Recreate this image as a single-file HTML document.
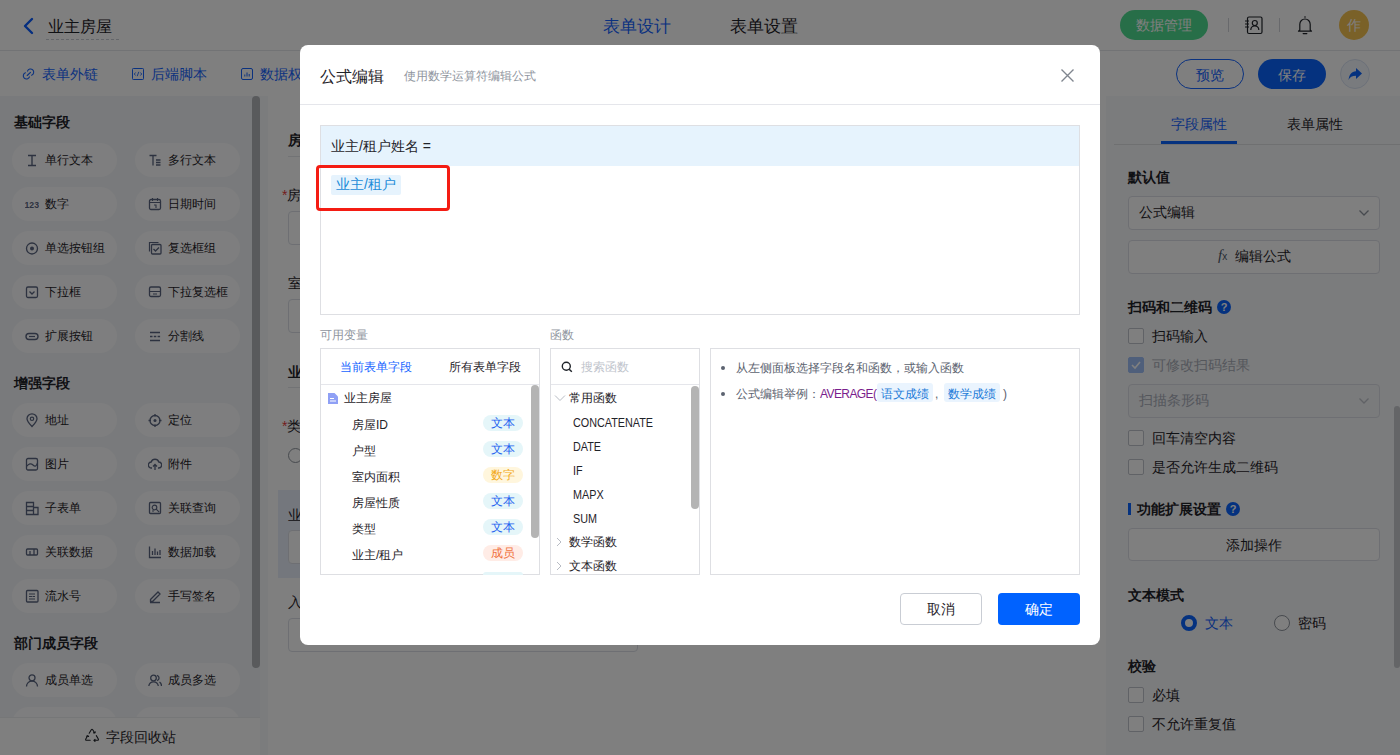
<!DOCTYPE html>
<html><head><meta charset="utf-8">
<style>
*{box-sizing:border-box;margin:0;padding:0}
html,body{width:1400px;height:755px;overflow:hidden;font-family:"Liberation Sans",sans-serif;color:#1f2329;background:#fff}
.a{position:absolute}
.hdr{left:0;top:0;width:1400px;height:51px;background:#fff;border-bottom:1px solid #e5e6eb}
.tb{left:0;top:51px;width:1400px;height:45px;background:#fff}
.lp{left:0;top:96px;width:260px;height:659px;background:#f3f5f9}
.gap{left:260px;top:96px;width:8px;height:659px;background:#f7f8fa}
.cv{left:268px;top:96px;width:838px;height:659px;background:#fff}
.rp{left:1106px;top:96px;width:294px;height:659px;background:#f7f8fa}
.mask{left:0;top:0;width:1400px;height:755px;background:rgba(0,0,0,.5)}
.modal{left:300px;top:45px;width:800px;height:600px;background:#fff;border-radius:8px}
.t16{font-size:16px;line-height:22px;white-space:nowrap}
.t14{font-size:14px;line-height:20px;white-space:nowrap}
.t12{font-size:12px;line-height:18px;white-space:nowrap}
.t13{font-size:13px;line-height:18px;white-space:nowrap}
.t14b{font-size:14px;line-height:20px;font-weight:bold;white-space:nowrap}
.pill{width:105px;height:34px;border-radius:17px;background:#fdfdfe}
.inp{border:1px solid #dcdfe6;border-radius:4px;background:#fff}
.cb{width:16px;height:16px;border:1px solid #c0c4cc;border-radius:2px;background:#fff}
.qm{width:14px;height:14px;border-radius:50%;background:#0a64ff;color:#fff;font-size:11px;line-height:14px;text-align:center;font-weight:bold}
.pn{border:1px solid #dedfe3;background:#fff}
.tag{width:40px;height:16px;border-radius:8px;font-size:12px;line-height:16px;text-align:center}
.fn{font-size:12px;line-height:18px;color:#1f2329;white-space:nowrap;transform:scaleX(0.9);transform-origin:0 0}
</style></head><body>

<div class="a hdr"></div>
<svg class="a" style="left:22px;top:17px" width="14" height="18" viewBox="0 0 14 18"><path d="M10 2 L3 9 L10 16" fill="none" stroke="#0a5cff" stroke-width="2.4" stroke-linecap="round" stroke-linejoin="round"/></svg>
<div class="a t16" style="left:48px;top:16px">业主房屋</div>
<div class="a" style="left:46px;top:39px;width:73px;border-top:1px dashed #c9cdd4"></div>
<div class="a t16" style="left:603px;top:15px;color:#1664ff;font-size:16.5px">表单设计</div>
<div class="a t16" style="left:730px;top:15px;color:#1f2329;font-size:16.5px">表单设置</div>
<div class="a" style="left:1120px;top:10px;width:88px;height:30px;border-radius:15px;background:#4fdc90"></div>
<div class="a t14" style="left:1136px;top:15px;color:#fff;font-size:14px">数据管理</div>
<div class="a" style="left:1228px;top:18px;width:1px;height:14px;background:#d0d3d9"></div>
<div class="a" style="left:1279px;top:18px;width:1px;height:14px;background:#d0d3d9"></div>
<svg class="a" style="left:1243px;top:16px" width="21" height="19" viewBox="0 0 21 19"><rect x="4.5" y="1" width="14.5" height="16.5" rx="1.5" fill="none" stroke="#1f2329" stroke-width="1.2"/><circle cx="11.8" cy="7" r="2.5" fill="none" stroke="#1f2329" stroke-width="1.2"/><path d="M7.8 14 Q7.8 10 11.8 10 Q15.8 10 15.8 14" fill="none" stroke="#1f2329" stroke-width="1.2"/><path d="M2 5h4M2 8h4M2 11h4" stroke="#1f2329" stroke-width="1.1"/></svg>
<svg class="a" style="left:1296px;top:15px" width="18" height="20" viewBox="0 0 18 20"><path d="M9 1.2v1.5M3.8 15V9.2a5.2 5.2 0 0 1 10.4 0V15l1.3 1.2h-13z" fill="none" stroke="#1f2329" stroke-width="1.2" stroke-linejoin="round"/><path d="M7.2 18.6h3.6" stroke="#1f2329" stroke-width="1.3" stroke-linecap="round"/></svg>
<div class="a" style="left:1339px;top:10px;width:30px;height:30px;border-radius:50%;background:#f5c250"></div>
<div class="a" style="left:1347px;top:17px;font-size:14px;line-height:16px;color:#fff">作</div>

<div class="a tb"></div>
<svg class="a" style="left:22px;top:67px" width="14" height="14" viewBox="0 0 14 14"><path d="M5.5 4.1 A3.2 3.2 0 1 1 9.6 8.2 M7.5 9.9 A3.2 3.2 0 1 1 3.4 5.8 M5.2 8.5 L8.5 5.3" fill="none" stroke="#1664ff" stroke-width="1.1" stroke-linecap="round"/></svg>
<div class="a t14" style="left:42px;top:64px;color:#1664ff">表单外链</div>
<svg class="a" style="left:132px;top:68px" width="12" height="12" viewBox="0 0 12 12"><rect x="0.5" y="0.5" width="11" height="11" rx="0.8" fill="none" stroke="#1664ff" stroke-width="1"/><path d="M3.6 4.5 L2.3 6 L3.6 7.5 M8.4 4.5 L9.7 6 L8.4 7.5 M6.8 3.8 L5.2 8.2" fill="none" stroke="#1664ff" stroke-width="0.9"/></svg>
<div class="a t14" style="left:151px;top:64px;color:#1664ff">后端脚本</div>
<svg class="a" style="left:241px;top:68px" width="12" height="12" viewBox="0 0 12 12"><rect x="0.5" y="0.5" width="11" height="11" rx="1.5" fill="none" stroke="#1664ff" stroke-width="1"/><path d="M3.8 8.5V6.5M6 8.5V4.5M8.2 8.5V6" stroke="#1664ff" stroke-width="1"/></svg>
<div class="a t14" style="left:260px;top:64px;color:#1664ff">数据权限</div>
<div class="a" style="left:1176px;top:59px;width:68px;height:30px;border-radius:15px;border:1px solid #1664ff;background:#fff"></div>
<div class="a t14" style="left:1196px;top:65px;color:#1664ff">预览</div>
<div class="a" style="left:1258px;top:59px;width:68px;height:30px;border-radius:15px;background:#0a64ff"></div>
<div class="a t14" style="left:1278px;top:65px;color:#fff">保存</div>
<div class="a" style="left:1340px;top:59px;width:30px;height:30px;border-radius:50%;border:1px solid #d9e2f2;background:#f2f6fd"></div>
<svg class="a" style="left:1347px;top:66px" width="16" height="16" viewBox="0 0 16 16"><path d="M9 2 L15 7.5 L9 13 V9.8 C5 9.8 3 11 1.5 14 C2 9 4.5 5.5 9 5.3 Z" fill="#0a64ff"/></svg>

<div class="a lp"></div>
<div class="a t14b" style="left:14px;top:112px">基础字段</div>
<div class="a pill" style="left:12px;top:143px"></div><svg class="a" style="left:25px;top:153px" width="14" height="15" viewBox="0 0 14 15"><path d="M3 2.5h8M3 12.5h8M7 2.5v10" stroke="#5a6580" stroke-width="1.4" fill="none"/></svg><div class="a t12" style="left:45px;top:151px">单行文本</div>
<div class="a pill" style="left:135px;top:143px"></div><svg class="a" style="left:148px;top:153px" width="14" height="15" viewBox="0 0 14 15"><path d="M1.5 2.5h7M5 2.5v10M8 7h4.5M8 9.5h4.5M8 12h4.5" stroke="#5a6580" stroke-width="1.3" fill="none"/></svg><div class="a t12" style="left:168px;top:151px">多行文本</div>
<div class="a pill" style="left:12px;top:187px"></div><svg class="a" style="left:25px;top:197px" width="14" height="15" viewBox="0 0 14 15"><text x="-0.5" y="10.5" font-size="9.5" font-weight="bold" font-family="Liberation Sans" fill="#5a6580" textLength="14.5" lengthAdjust="spacingAndGlyphs">123</text></svg><div class="a t12" style="left:45px;top:195px">数字</div>
<div class="a pill" style="left:135px;top:187px"></div><svg class="a" style="left:148px;top:197px" width="14" height="15" viewBox="0 0 14 15"><rect x="1.5" y="2.5" width="11" height="10" rx="1.5" stroke="#5a6580" stroke-width="1.3" fill="none"/><path d="M1.5 5.5h11M4.5 1v3M9.5 1v3M6 8h2v3" stroke="#5a6580" stroke-width="1.1" fill="none"/></svg><div class="a t12" style="left:168px;top:195px">日期时间</div>
<div class="a pill" style="left:12px;top:231px"></div><svg class="a" style="left:25px;top:241px" width="14" height="15" viewBox="0 0 14 15"><circle cx="7" cy="7.5" r="5.5" stroke="#5a6580" stroke-width="1.3" fill="none"/><circle cx="7" cy="7.5" r="2" fill="#5a6580"/></svg><div class="a t12" style="left:45px;top:239px">单选按钮组</div>
<div class="a pill" style="left:135px;top:231px"></div><svg class="a" style="left:148px;top:241px" width="14" height="15" viewBox="0 0 14 15"><path d="M1.5 10.5V1.5h9" stroke="#5a6580" stroke-width="1.2" fill="none"/><rect x="3.5" y="3.5" width="9.5" height="9.5" rx="1" stroke="#5a6580" stroke-width="1.3" fill="none"/><path d="M5.5 8l2 2 3.5-3.5" stroke="#5a6580" stroke-width="1.3" fill="none"/></svg><div class="a t12" style="left:168px;top:239px">复选框组</div>
<div class="a pill" style="left:12px;top:275px"></div><svg class="a" style="left:25px;top:285px" width="14" height="15" viewBox="0 0 14 15"><rect x="1.5" y="2" width="11" height="10.5" rx="1.5" stroke="#5a6580" stroke-width="1.3" fill="none"/><path d="M4.5 6.5l2.5 2.5 2.5-2.5" stroke="#5a6580" stroke-width="1.3" fill="none"/></svg><div class="a t12" style="left:45px;top:283px">下拉框</div>
<div class="a pill" style="left:135px;top:275px"></div><svg class="a" style="left:148px;top:285px" width="14" height="15" viewBox="0 0 14 15"><rect x="1.5" y="2" width="11" height="9.5" rx="1.5" stroke="#5a6580" stroke-width="1.3" fill="none"/><path d="M1.5 6.5h11M5 9h4" stroke="#5a6580" stroke-width="1.2" fill="none"/></svg><div class="a t12" style="left:168px;top:283px">下拉复选框</div>
<div class="a pill" style="left:12px;top:319px"></div><svg class="a" style="left:25px;top:329px" width="14" height="15" viewBox="0 0 14 15"><rect x="1" y="4.5" width="12" height="6" rx="3" stroke="#5a6580" stroke-width="1.4" fill="none"/><path d="M4 7.5h6" stroke="#5a6580" stroke-width="1.2"/></svg><div class="a t12" style="left:45px;top:327px">扩展按钮</div>
<div class="a pill" style="left:135px;top:319px"></div><svg class="a" style="left:148px;top:329px" width="14" height="15" viewBox="0 0 14 15"><path d="M2 3.5h10M2 11.5h10M2 7.5h2.5M5.8 7.5h2.5M9.6 7.5h2.5" stroke="#5a6580" stroke-width="1.3" fill="none"/></svg><div class="a t12" style="left:168px;top:327px">分割线</div>
<div class="a t14b" style="left:14px;top:373px">增强字段</div>
<div class="a pill" style="left:12px;top:403px"></div><svg class="a" style="left:25px;top:413px" width="14" height="15" viewBox="0 0 14 15"><path d="M7 13.5C3.5 10 2 7.8 2 5.8a5 5 0 0 1 10 0c0 2-1.5 4.2-5 7.7z" stroke="#5a6580" stroke-width="1.3" fill="none"/><circle cx="7" cy="5.8" r="1.7" stroke="#5a6580" stroke-width="1.2" fill="none"/></svg><div class="a t12" style="left:45px;top:411px">地址</div>
<div class="a pill" style="left:135px;top:403px"></div><svg class="a" style="left:148px;top:413px" width="14" height="15" viewBox="0 0 14 15"><circle cx="7" cy="7.5" r="5" stroke="#5a6580" stroke-width="1.3" fill="none"/><circle cx="7" cy="7.5" r="1.5" fill="#5a6580"/><path d="M7 1v2.5M7 11.5V14M0.5 7.5H3M11 7.5h2.5" stroke="#5a6580" stroke-width="1.3"/></svg><div class="a t12" style="left:168px;top:411px">定位</div>
<div class="a pill" style="left:12px;top:447px"></div><svg class="a" style="left:25px;top:457px" width="14" height="15" viewBox="0 0 14 15"><rect x="1.5" y="1.5" width="11" height="11.5" rx="1.5" stroke="#5a6580" stroke-width="1.3" fill="none"/><path d="M1.5 9.5 Q5 5 8 8 T12.5 6" stroke="#5a6580" stroke-width="1.2" fill="none"/></svg><div class="a t12" style="left:45px;top:455px">图片</div>
<div class="a pill" style="left:135px;top:447px"></div><svg class="a" style="left:148px;top:457px" width="14" height="15" viewBox="0 0 14 15"><path d="M4 11H3.5a3 3 0 0 1-.3-6 4 4 0 0 1 7.6 0 3 3 0 0 1-.3 6H10" stroke="#5a6580" stroke-width="1.3" fill="none"/><path d="M7 13V7.5M5 9.5l2-2 2 2" stroke="#5a6580" stroke-width="1.3" fill="none"/></svg><div class="a t12" style="left:168px;top:455px">附件</div>
<div class="a pill" style="left:12px;top:491px"></div><svg class="a" style="left:25px;top:501px" width="14" height="15" viewBox="0 0 14 15"><path d="M1.5 1.5h7v12h-7zM8.5 6.5h4.5v7H8.5M1.5 5.5h7M1.5 9.5h7" stroke="#5a6580" stroke-width="1.3" fill="none"/></svg><div class="a t12" style="left:45px;top:499px">子表单</div>
<div class="a pill" style="left:135px;top:491px"></div><svg class="a" style="left:148px;top:501px" width="14" height="15" viewBox="0 0 14 15"><rect x="1.5" y="1.5" width="11" height="11" rx="1" stroke="#5a6580" stroke-width="1.3" fill="none"/><circle cx="6.5" cy="6.5" r="2.3" stroke="#5a6580" stroke-width="1.2" fill="none"/><path d="M8.2 8.2l3 3M4 10h2" stroke="#5a6580" stroke-width="1.2"/></svg><div class="a t12" style="left:168px;top:499px">关联查询</div>
<div class="a pill" style="left:12px;top:535px"></div><svg class="a" style="left:25px;top:545px" width="14" height="15" viewBox="0 0 14 15"><path d="M5 4H2.5a1 1 0 0 0-1 1v4a1 1 0 0 0 1 1H5M9 4h2.5a1 1 0 0 1 1 1v4a1 1 0 0 1-1 1H9M5 6v4h4V4H5" stroke="#5a6580" stroke-width="1.3" fill="none"/></svg><div class="a t12" style="left:45px;top:543px">关联数据</div>
<div class="a pill" style="left:135px;top:535px"></div><svg class="a" style="left:148px;top:545px" width="14" height="15" viewBox="0 0 14 15"><path d="M1.5 1.5v11h11.5M4.5 10V6M7 10V3.5M9.5 10V6.5M12 10V5" stroke="#5a6580" stroke-width="1.3" fill="none"/></svg><div class="a t12" style="left:168px;top:543px">数据加载</div>
<div class="a pill" style="left:12px;top:579px"></div><svg class="a" style="left:25px;top:589px" width="14" height="15" viewBox="0 0 14 15"><rect x="1.5" y="1.5" width="11.5" height="11.5" rx="1" stroke="#5a6580" stroke-width="1.3" fill="none"/><path d="M4 5h6M4 7.5h3M7.5 7.5h2.5M4 10h6" stroke="#5a6580" stroke-width="1.1" fill="none"/></svg><div class="a t12" style="left:45px;top:587px">流水号</div>
<div class="a pill" style="left:135px;top:579px"></div><svg class="a" style="left:148px;top:589px" width="14" height="15" viewBox="0 0 14 15"><path d="M2.5 10.5l7.5-7.5 2 2-7.5 7.5H2.5zM2 13.5h10" stroke="#5a6580" stroke-width="1.3" fill="none"/></svg><div class="a t12" style="left:168px;top:587px">手写签名</div>
<div class="a t14b" style="left:14px;top:633px">部门成员字段</div>
<div class="a pill" style="left:12px;top:663px"></div><svg class="a" style="left:25px;top:673px" width="14" height="15" viewBox="0 0 14 15"><circle cx="7" cy="4.8" r="3" stroke="#5a6580" stroke-width="1.3" fill="none"/><path d="M1.5 13.5a5.5 5.5 0 0 1 11 0" stroke="#5a6580" stroke-width="1.3" fill="none"/></svg><div class="a t12" style="left:45px;top:671px">成员单选</div>
<div class="a pill" style="left:135px;top:663px"></div><svg class="a" style="left:148px;top:673px" width="14" height="15" viewBox="0 0 14 15"><circle cx="5.5" cy="5" r="2.8" stroke="#5a6580" stroke-width="1.3" fill="none"/><path d="M0.8 13a4.8 4.8 0 0 1 9.5 0M9 2.3a2.8 2.8 0 0 1 0 5.4M11.5 9a4.8 4.8 0 0 1 2 4" stroke="#5a6580" stroke-width="1.3" fill="none"/></svg><div class="a t12" style="left:168px;top:671px">成员多选</div>
<div class="a pill" style="left:12px;top:707px"></div><div class="a pill" style="left:135px;top:707px"></div>
<div class="a" style="left:252px;top:96px;width:8px;height:572px;border-radius:4px;background:#b2b4b8"></div>
<div class="a" style="left:0;top:717px;width:260px;height:38px;background:#fff;border-top:1px solid #eceef1"></div>
<svg class="a" style="left:84px;top:728px" width="16" height="15" viewBox="0 0 16 15"><path d="M5.2 5.2 L7.3 1.8 Q8 0.8 8.7 1.8 L10.6 4.8 M9.6 4.9 L10.8 5 L11.3 3.9 M12.3 7.6 L14.3 11 Q14.8 12.3 13.5 12.3 H10 M11 11.3 L9.9 12.3 L11 13.4 M6.2 12.3 H2.6 Q1.2 12.3 1.8 11 L3.6 7.8 M2.6 8.3 L3.7 7.6 L4.6 8.5" fill="none" stroke="#1f2329" stroke-width="1.1" stroke-linejoin="round" stroke-linecap="round"/></svg>
<div class="a t14" style="left:106px;top:727px;color:#1f2329">字段回收站</div>
<div class="a gap"></div>
<div class="a cv"></div>
<div class="a t14b" style="left:288px;top:130px">房屋信息</div>
<div class="a" style="left:288px;top:156px;width:800px;height:1px;background:#e5e6eb"></div>
<div class="a t14" style="left:282px;top:185px"><span style="color:#e83b3b">*</span>房屋ID</div>
<div class="a inp" style="left:288px;top:211px;width:350px;height:34px"></div>
<div class="a t14" style="left:288px;top:273px">室内面积</div>
<div class="a inp" style="left:288px;top:299px;width:350px;height:34px"></div>
<div class="a t14b" style="left:288px;top:362px">业主信息</div>
<div class="a" style="left:288px;top:387px;width:800px;height:1px;background:#e5e6eb"></div>
<div class="a t14" style="left:282px;top:416px"><span style="color:#e83b3b">*</span>类型</div>
<div class="a" style="left:288px;top:448px;width:15px;height:15px;border-radius:50%;border:1px solid #8f959e;background:#fff"></div>
<div class="a" style="left:278px;top:490px;width:820px;height:88px;background:#e8eefa"></div>
<div class="a t14" style="left:288px;top:505px">业主/租户姓名</div>
<div class="a inp" style="left:288px;top:530px;width:350px;height:34px"></div>
<div class="a t14" style="left:288px;top:592px">入住时间</div>
<div class="a inp" style="left:288px;top:618px;width:350px;height:34px"></div>

<div class="a rp"></div>
<div class="a t14" style="left:1171px;top:114px;color:#1664ff">字段属性</div>
<div class="a t14" style="left:1287px;top:114px">表单属性</div>
<div class="a" style="left:1114px;top:144px;width:286px;height:1px;background:#dee0e3"></div>
<div class="a" style="left:1161px;top:141px;width:76px;height:3px;background:#0a64ff"></div>
<div class="a t14b" style="left:1128px;top:167px">默认值</div>
<div class="a inp" style="left:1128px;top:196px;width:252px;height:34px"></div>
<div class="a t14" style="left:1139px;top:202px">公式编辑</div>
<svg class="a" style="left:1358px;top:208px" width="12" height="10" viewBox="0 0 12 10"><path d="M1.5 2.5l4.5 4.5 4.5-4.5" fill="none" stroke="#8f959e" stroke-width="1.3"/></svg>
<div class="a inp" style="left:1128px;top:240px;width:252px;height:34px"></div>
<div class="a" style="left:1218px;top:245px;font-family:'Liberation Serif',serif;font-style:italic;font-size:15px;line-height:20px;color:#4e5969">f<span style="font-size:10px;font-style:normal;font-family:'Liberation Sans',sans-serif">x</span></div>
<div class="a t14" style="left:1235px;top:246px">编辑公式</div>
<div class="a t14b" style="left:1128px;top:297px">扫码和二维码</div>
<div class="a qm" style="left:1217px;top:300px">?</div>
<div class="a cb" style="left:1128px;top:328px"></div>
<div class="a t14" style="left:1152px;top:326px">扫码输入</div>
<div class="a cb" style="left:1128px;top:357px;background:#9fbff7;border-color:#9fbff7"></div>
<svg class="a" style="left:1130px;top:359px" width="12" height="12" viewBox="0 0 12 12"><path d="M2 6l3 3 5-6" fill="none" stroke="#fff" stroke-width="1.6"/></svg>
<div class="a t14" style="left:1152px;top:355px;color:#a9aeb8">可修改扫码结果</div>
<div class="a inp" style="left:1128px;top:384px;width:252px;height:34px;background:#f5f6f8"></div>
<div class="a t14" style="left:1139px;top:390px;color:#a9aeb8">扫描条形码</div>
<svg class="a" style="left:1358px;top:396px" width="12" height="10" viewBox="0 0 12 10"><path d="M1.5 2.5l4.5 4.5 4.5-4.5" fill="none" stroke="#c0c4cc" stroke-width="1.3"/></svg>
<div class="a cb" style="left:1128px;top:430px"></div>
<div class="a t14" style="left:1152px;top:428px">回车清空内容</div>
<div class="a cb" style="left:1128px;top:459px"></div>
<div class="a t14" style="left:1152px;top:457px">是否允许生成二维码</div>
<div class="a" style="left:1128px;top:503px;width:3px;height:12px;background:#0a64ff"></div>
<div class="a t14b" style="left:1137px;top:499px">功能扩展设置</div>
<div class="a qm" style="left:1226px;top:502px">?</div>
<div class="a inp" style="left:1128px;top:528px;width:252px;height:33px"></div>
<div class="a t14" style="left:1226px;top:535px">添加操作</div>
<div class="a t14b" style="left:1128px;top:585px">文本模式</div>
<div class="a" style="left:1181px;top:615px;width:16px;height:16px;border-radius:50%;border:4.5px solid #0a64ff;background:#fff"></div>
<div class="a t14" style="left:1205px;top:613px;color:#1664ff">文本</div>
<div class="a" style="left:1274px;top:615px;width:16px;height:16px;border-radius:50%;border:1px solid #8f959e;background:#fff"></div>
<div class="a t14" style="left:1298px;top:613px">密码</div>
<div class="a t14b" style="left:1128px;top:656px">校验</div>
<div class="a cb" style="left:1128px;top:687px"></div>
<div class="a t14" style="left:1152px;top:685px">必填</div>
<div class="a cb" style="left:1128px;top:716px"></div>
<div class="a t14" style="left:1152px;top:714px">不允许重复值</div>
<div class="a" style="left:1394px;top:406px;width:6px;height:262px;border-radius:3px;background:#c8cacf"></div>

<div class="a mask"></div>
<div class="a modal"></div>
<div class="a t16" style="left:320px;top:66px;color:#1f2329">公式编辑</div>
<div class="a t12" style="left:404px;top:67px;color:#8f959e;font-size:12px">使用数学运算符编辑公式</div>
<svg class="a" style="left:1060px;top:68px" width="15" height="15" viewBox="0 0 15 15"><path d="M1.5 1.5l12 12M13.5 1.5l-12 12" stroke="#80868f" stroke-width="1.4"/></svg>
<div class="a" style="left:300px;top:104px;width:800px;height:1px;background:#e5e6eb"></div>
<div class="a" style="left:320px;top:125px;width:760px;height:190px;border:1px solid #dedfe3;background:#fff"></div>
<div class="a" style="left:321px;top:126px;width:758px;height:40px;background:#e6f3fd"></div>
<div class="a t14" style="left:331px;top:136px;color:#1f2329">业主/租户姓名 =</div>
<div class="a" style="left:331px;top:175px;width:70px;height:20px;border-radius:2px;background:#e6f3fd"></div>
<div class="a t14" style="left:336px;top:174px;color:#1a8ad8">业主/租户</div>
<div class="a" style="left:316px;top:165px;width:134px;height:46px;border:3px solid #f41c13;border-radius:4px"></div>
<div class="a t12" style="left:320px;top:326px;color:#8f959e">可用变量</div>
<div class="a t12" style="left:550px;top:326px;color:#8f959e">函数</div>
<div class="a pn" style="left:320px;top:348px;width:220px;height:227px"></div>
<div class="a" style="left:321px;top:384px;width:218px;height:1px;background:#e5e6eb"></div>
<div class="a t12" style="left:340px;top:358px;color:#1664ff">当前表单字段</div>
<div class="a t12" style="left:449px;top:358px;color:#1f2329">所有表单字段</div>
<svg class="a" style="left:328px;top:393px" width="10" height="11" viewBox="0 0 10 11"><path d="M0 0h6.5l3.5 3.5V11H0z" fill="#8fa0f5"/><path d="M2 5.5h4M2 8h6" stroke="#fff" stroke-width="1.1"/></svg>
<div class="a t12" style="left:344px;top:389px;color:#1f2329">业主房屋</div>
<div class="a t12" style="left:352px;top:416px;color:#1f2329">房屋ID</div><div class="a tag" style="left:483px;top:415px;background:#e5f6f9;color:#1f63f0">文本</div>
<div class="a t12" style="left:352px;top:442px;color:#1f2329">户型</div><div class="a tag" style="left:483px;top:441px;background:#e5f6f9;color:#1f63f0">文本</div>
<div class="a t12" style="left:352px;top:468px;color:#1f2329">室内面积</div><div class="a tag" style="left:483px;top:467px;background:#fff6dd;color:#f2a918">数字</div>
<div class="a t12" style="left:352px;top:494px;color:#1f2329">房屋性质</div><div class="a tag" style="left:483px;top:493px;background:#e5f6f9;color:#1f63f0">文本</div>
<div class="a t12" style="left:352px;top:520px;color:#1f2329">类型</div><div class="a tag" style="left:483px;top:519px;background:#e5f6f9;color:#1f63f0">文本</div>
<div class="a t12" style="left:352px;top:546px;color:#1f2329">业主/租户</div><div class="a tag" style="left:483px;top:545px;background:#ffece6;color:#f0713c">成员</div>
<div class="a" style="left:483px;top:572px;width:40px;height:3px;border-radius:3px 3px 0 0;background:#e5f6f9"></div>
<div class="a" style="left:531px;top:385px;width:8px;height:153px;border-radius:4px;background:#b4b4b4"></div>
<div class="a pn" style="left:550px;top:348px;width:150px;height:227px"></div>
<div class="a" style="left:551px;top:384px;width:148px;height:1px;background:#e5e6eb"></div>
<svg class="a" style="left:561px;top:361px" width="12" height="12" viewBox="0 0 12 12"><circle cx="5.3" cy="5.3" r="4" fill="none" stroke="#1f2329" stroke-width="1.4"/><path d="M8.2 8.2l2.6 2.6" stroke="#1f2329" stroke-width="1.5"/></svg>
<div class="a t12" style="left:581px;top:358px;color:#c0c4cc">搜索函数</div>
<svg class="a" style="left:554px;top:394px" width="12" height="8" viewBox="0 0 12 8"><path d="M1 1.5l5 5 5-5" fill="none" stroke="#b8bcc4" stroke-width="1"/></svg>
<div class="a t12" style="left:569px;top:389px;color:#1f2329">常用函数</div>
<div class="a fn" style="left:573px;top:413.5px">CONCATENATE</div>
<div class="a fn" style="left:573px;top:437.5px">DATE</div>
<div class="a fn" style="left:573px;top:461.5px">IF</div>
<div class="a fn" style="left:573px;top:485.5px">MAPX</div>
<div class="a fn" style="left:573px;top:509.5px">SUM</div>
<svg class="a" style="left:556px;top:537px" width="6" height="10" viewBox="0 0 6 10"><path d="M1 1l4 4-4 4" fill="none" stroke="#b8bcc4" stroke-width="1"/></svg><div class="a t12" style="left:569px;top:533px;color:#1f2329">数学函数</div>
<svg class="a" style="left:556px;top:561px" width="6" height="10" viewBox="0 0 6 10"><path d="M1 1l4 4-4 4" fill="none" stroke="#b8bcc4" stroke-width="1"/></svg><div class="a t12" style="left:569px;top:557px;color:#1f2329">文本函数</div>
<div class="a" style="left:691px;top:386px;width:8px;height:123px;border-radius:4px;background:#b4b4b4"></div>
<div class="a pn" style="left:710px;top:348px;width:370px;height:227px"></div>
<div class="a" style="left:721px;top:366px;width:4px;height:4px;border-radius:50%;background:#5c6370"></div>
<div class="a t12" style="left:736px;top:359px;color:#5c6370">从左侧面板选择字段名和函数，或输入函数</div>
<div class="a" style="left:721px;top:392px;width:4px;height:4px;border-radius:50%;background:#5c6370"></div>
<div class="a t12" style="left:736px;top:385px;color:#5c6370">公式编辑举例：<span style="color:#7a1e8c;letter-spacing:-0.6px">AVERAGE(</span></div>
<div class="a" style="left:877px;top:383px;width:56px;height:19px;border-radius:3px;background:#eaf4fe"></div>
<div class="a t12" style="left:881px;top:385px;color:#1a7ad8">语文成绩</div>
<div class="a t12" style="left:935px;top:385px;color:#5c6370">,</div>
<div class="a" style="left:944px;top:383px;width:56px;height:19px;border-radius:3px;background:#eaf4fe"></div>
<div class="a t12" style="left:948px;top:385px;color:#1a7ad8">数学成绩</div>
<div class="a t12" style="left:1003px;top:385px;color:#5c6370">)</div>
<div class="a" style="left:900px;top:593px;width:82px;height:32px;border:1px solid #c9cdd4;border-radius:4px;background:#fff"></div>
<div class="a t14" style="left:927px;top:599px;color:#1f2329">取消</div>
<div class="a" style="left:998px;top:593px;width:82px;height:32px;border-radius:4px;background:#0062ff"></div>
<div class="a t14" style="left:1025px;top:599px;color:#fff">确定</div>

</body></html>
